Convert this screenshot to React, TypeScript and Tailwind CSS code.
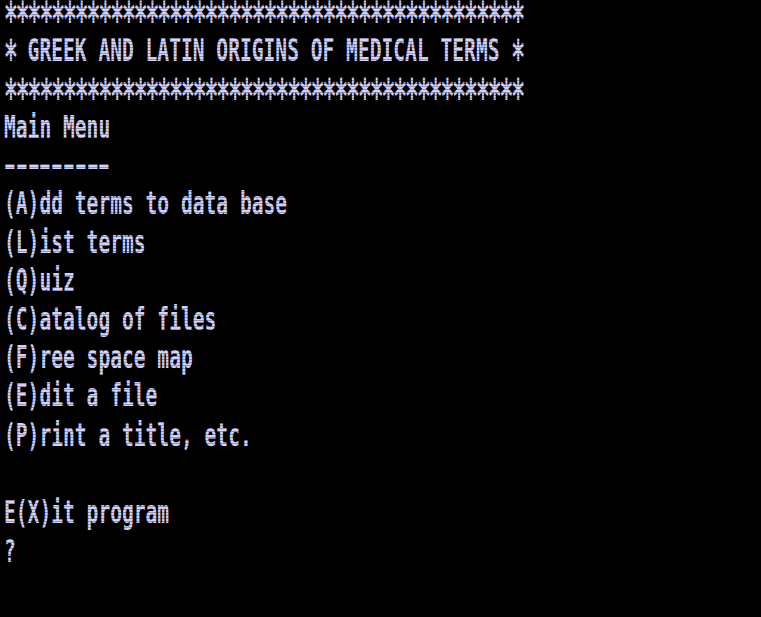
const lines = [
  "********************************************",
  "* GREEK AND LATIN ORIGINS OF MEDICAL TERMS *",
  "********************************************",
  "Main Menu",
  "---------",
  "(A)dd terms to data base",
  "(L)ist terms",
  "(Q)uiz",
  "(C)atalog of files",
  "(F)ree space map",
  "(E)dit a file",
  "(P)rint a title, etc.",
  "",
  "E(X)it program",
  "?",
];

// the old screen font draws * and - across the whole cell
function Glyph({ ch }: { ch: string }) {
  if (ch === "*") {
    return (
      <span className="inline-block w-[11.8px] h-[16px] text-center text-[23px] leading-[16px] align-top translate-y-[4px] scale-y-[1.3]">
        *
      </span>
    );
  }
  if (ch === "-") {
    return (
      <span className="inline-block w-[11.8px] h-[16px] overflow-hidden align-top text-center">
        <span className="inline-block scale-x-[1.5]">-</span>
      </span>
    );
  }
  return <>{ch}</>;
}

export default function App() {
  return (
    <div className="relative w-[761px] h-[617px] bg-black overflow-hidden">
      <div
        className="origin-top-left scale-y-[1.6] pl-[4px] text-[#d2d2fa] font-bold text-[19.6px] leading-[16px] whitespace-pre"
        style={{ fontFamily: '"DejaVu Sans Mono", monospace' }}
      >
        {lines.map((line, i) => (
          <div key={i} className="h-[24.06px]">
            {line === "" ? "\u00a0" : line.split("").map((ch, j) => <Glyph key={j} ch={ch} />)}
          </div>
        ))}
      </div>
      {/* crt scanlines */}
      <div className="absolute inset-0 pointer-events-none bg-[repeating-linear-gradient(to_bottom,transparent_0px,transparent_2px,rgba(0,0,0,0.3)_2px,rgba(0,0,0,0.3)_3px)]" />
    </div>
  );
}
